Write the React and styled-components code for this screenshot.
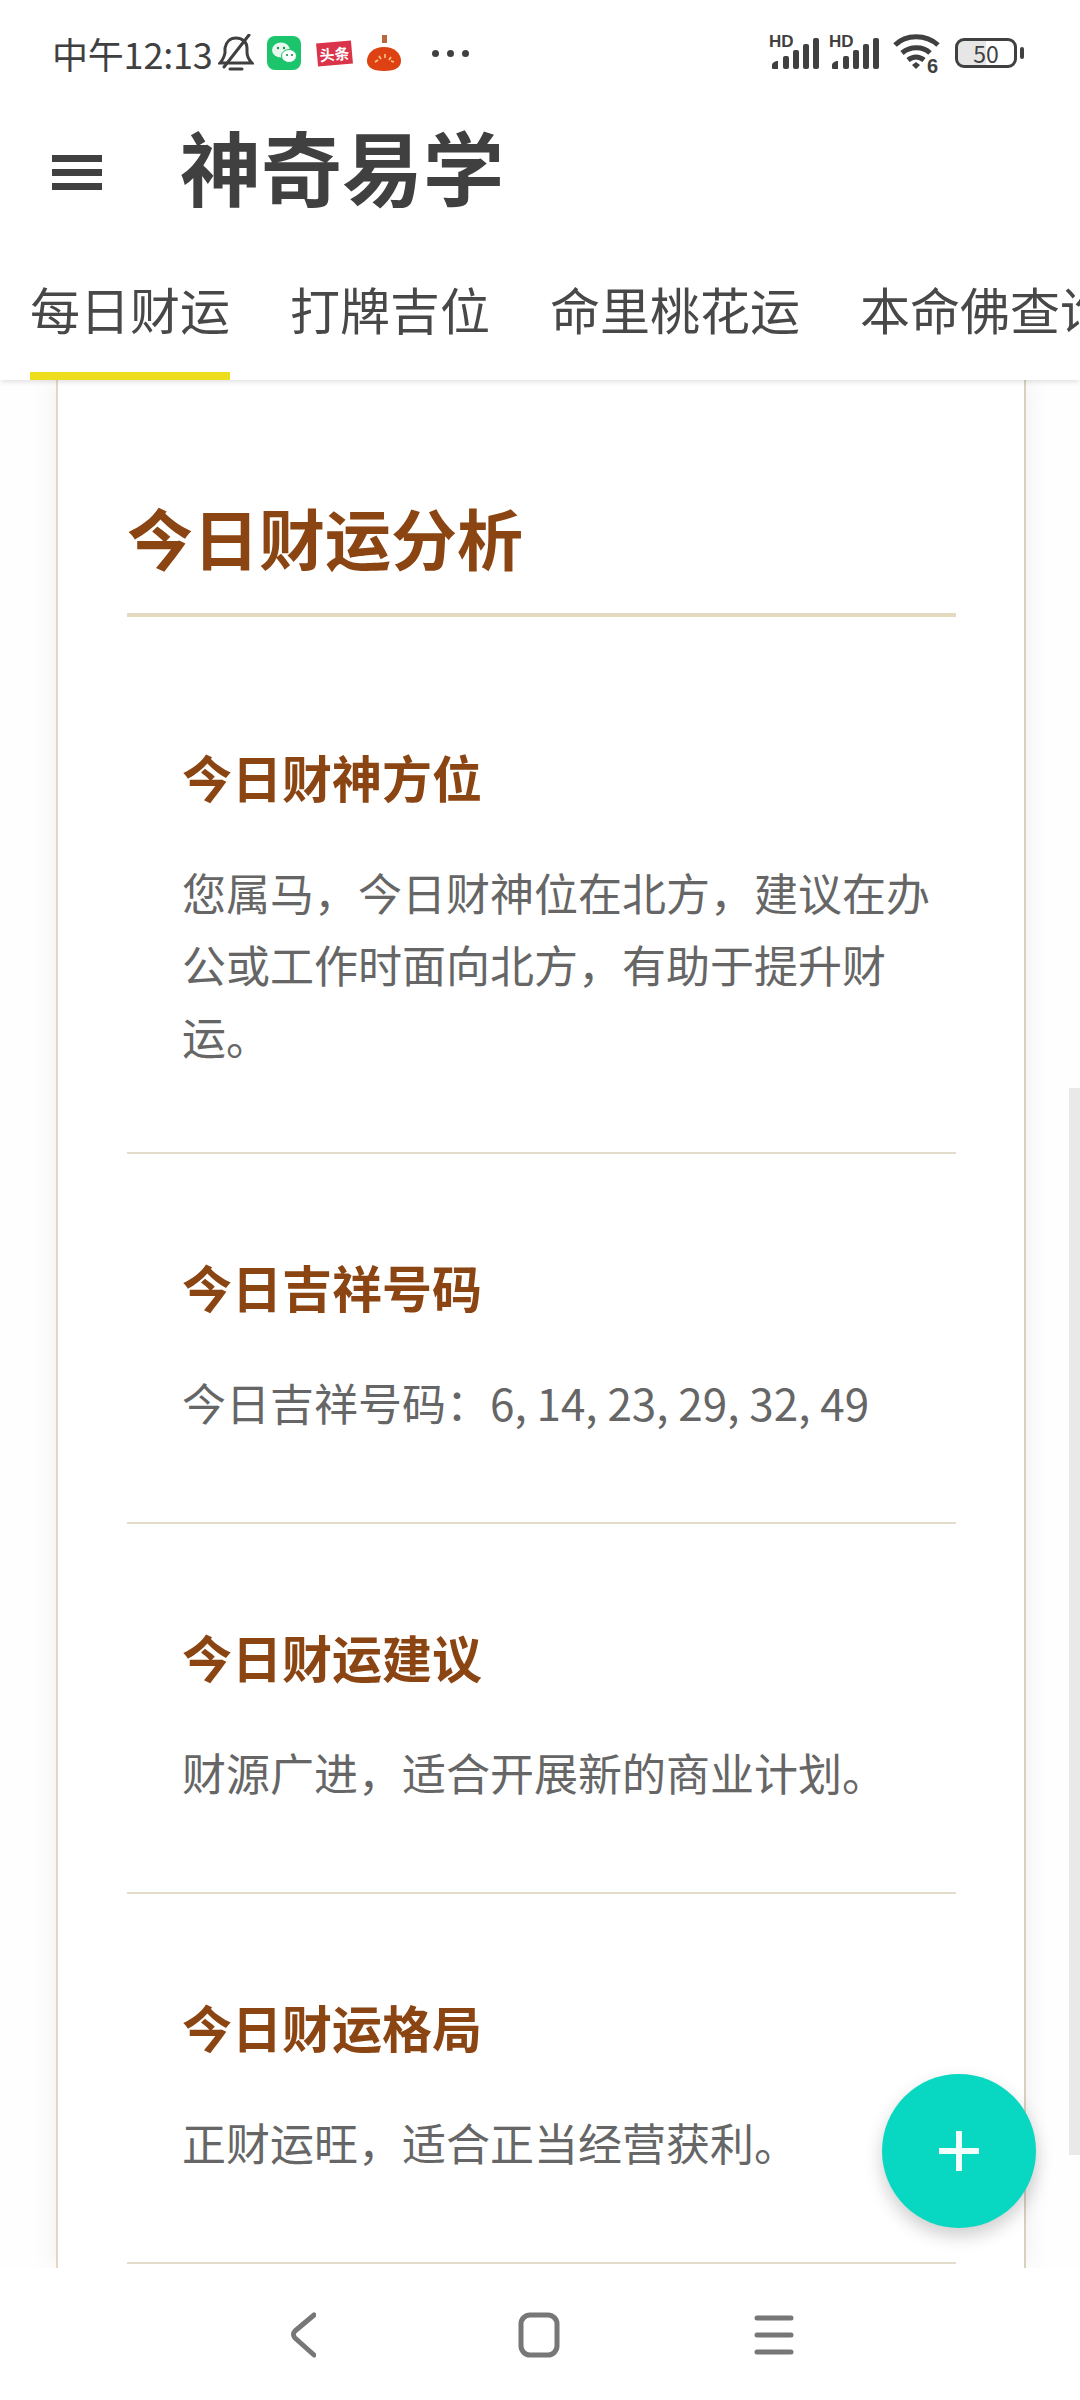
import React from "react";
import styled, { createGlobalStyle } from "styled-components";

const Global = createGlobalStyle`
  html, body {
    margin: 0;
    padding: 0;
    background: #fff;
  }
  * {
    box-sizing: border-box;
  }
`;

const Screen = styled.div`
  position: relative;
  width: 1080px;
  height: 2400px;
  display: flex;
  flex-direction: column;
  overflow: hidden;
  background: #fff;
  font-family: "Noto Sans CJK SC", "Noto Sans", sans-serif;
`;

const StatusBar = styled.div`
  height: 106px;
  flex: none;
  padding: 0 63px 0 52px;
  display: flex;
  align-items: center;
  justify-content: space-between;
  color: #404040;
`;

const StatusLeft = styled.div`
  display: flex;
  align-items: center;
`;

const StatusRight = styled.div`
  display: flex;
  align-items: center;
`;

const Clock = styled.span`
  font-size: 36px;
  line-height: 40px;
  letter-spacing: -0.2px;
  width: 166px;
  white-space: nowrap;
`;

const Toutiao = styled.span`
  width: 35px;
  height: 23px;
  margin: 0 15px 0 16px;
  background: #d9344a;
  color: #fff;
  font-size: 15px;
  line-height: 23px;
  font-weight: 700;
  text-align: center;
  white-space: nowrap;
  transform: rotate(-5deg);
`;

const Dots = styled.div`
  display: flex;
  gap: 8px;
  margin-left: 31px;
`;

const Dot = styled.span`
  width: 7px;
  height: 7px;
  border-radius: 50%;
  background: #404040;
`;

const SignalWrap = styled.div`
  position: relative;
  width: 50px;
  height: 34px;
  margin-right: 10px;
`;

const HdLabel = styled.span`
  position: absolute;
  left: -1px;
  top: -3px;
  font-family: "Liberation Sans", sans-serif;
  font-size: 17px;
  line-height: 18px;
  font-weight: 700;
  color: #404040;
`;

const Battery = styled.div`
  position: relative;
  width: 62px;
  height: 30px;
  margin-left: 14px;
  border: 3px solid #404040;
  border-radius: 9px;
  display: flex;
  align-items: center;
  justify-content: center;
  font-size: 23px;
  line-height: 24px;
  color: #404040;
  background: linear-gradient(90deg, #e6e6e6 0 50%, #fff 50%);
  &::after {
    content: "";
    position: absolute;
    right: -10px;
    top: 6px;
    width: 4px;
    height: 12px;
    border-radius: 2px;
    background: #404040;
  }
`;

const Header = styled.div`
  height: 124px;
  flex: none;
  display: flex;
  align-items: center;
  padding-left: 52px;
`;

const Burger = styled.div`
  width: 50px;
  display: flex;
  flex-direction: column;
  gap: 7px;
  margin: 8px 78px 0 0;
`;

const BurgerLine = styled.span`
  height: 7px;
  background: #404040;
`;

const Title = styled.h1`
  margin: 0;
  padding-bottom: 6px;
  font-size: 81px;
  line-height: 100px;
  font-weight: 700;
  color: #404040;
  white-space: nowrap;
`;

const Tabs = styled.div`
  position: relative;
  z-index: 2;
  height: 150px;
  flex: none;
  display: flex;
  gap: 60px;
  padding-left: 30px;
  overflow: hidden;
  background: #fff;
  box-shadow: 0 3px 5px -1px rgba(0, 0, 0, 0.12);
`;

const Tab = styled.div`
  flex: none;
  height: 100%;
  padding-top: 43px;
  font-size: 50px;
  line-height: 70px;
  color: #484848;
  white-space: nowrap;
  border-bottom: 8px solid ${(p) => (p.$active ? "#eedd1c" : "transparent")};
`;

const Content = styled.div`
  flex: 1;
  min-height: 0;
  overflow: hidden;
  background: #fefefe;
  padding: 0 54px 0 56px;
`;

const Card = styled.div`
  height: 100%;
  background: #fff;
  border-left: 2px solid #e6d6c6;
  border-right: 2px solid #d8d0c0;
  padding: 112px 68px 0 69px;
  box-shadow: 0 0 26px rgba(0, 0, 0, 0.07);
`;

const CardTitle = styled.h2`
  margin: 0;
  height: 125px;
  font-size: 66px;
  line-height: 88px;
  font-weight: 700;
  color: #8b4513;
  border-bottom: 4px solid #e3dac0;
  white-space: nowrap;
`;

const Section = styled.section`
  height: 370px;
  padding: 96px 0 0 55px;
  border-bottom: 2px solid #e3dccb;
  &:first-of-type {
    height: 537px;
    padding-top: 123px;
  }
`;

const SectionTitle = styled.h3`
  margin: 0 0 44px;
  font-size: 50px;
  line-height: 72px;
  font-weight: 700;
  color: #8b4513;
  white-space: nowrap;
`;

const SectionText = styled.p`
  margin: 0;
  font-size: 44px;
  line-height: 72px;
  color: #666;
`;

const Scrollbar = styled.div`
  position: absolute;
  right: 0;
  top: 1088px;
  width: 11px;
  height: 1067px;
  background: #e9e9e9;
`;

const Fab = styled.div`
  position: absolute;
  left: 882px;
  top: 2074px;
  width: 154px;
  height: 154px;
  border-radius: 50%;
  background: #08d8c2;
  display: flex;
  align-items: center;
  justify-content: center;
  box-shadow: 0 8px 18px rgba(0, 0, 0, 0.2);
`;

const NavBar = styled.div`
  position: relative;
  z-index: 1;
  height: 132px;
  flex: none;
  background: #fff;
  display: flex;
  align-items: flex-start;
  padding: 44px 0 0 290px;
  gap: 202px;
`;

const NavIcon = styled.svg`
  display: block;
  flex: none;
`;

const sections = [
  {
    title: "今日财神方位",
    text: "您属马，今日财神位在北方，建议在办公或工作时面向北方，有助于提升财运。",
  },
  { title: "今日吉祥号码", text: "今日吉祥号码：6, 14, 23, 29, 32, 49" },
  { title: "今日财运建议", text: "财源广进，适合开展新的商业计划。" },
  { title: "今日财运格局", text: "正财运旺，适合正当经营获利。" },
];

const tabs = ["每日财运", "打牌吉位", "命里桃花运", "本命佛查询"];

const BellOff = () => (
  <NavIcon width="36" height="38" viewBox="0 0 36 38" fill="none" stroke="#404040" strokeWidth="3" strokeLinecap="round" style={{ marginRight: 13 }}>
    <path d="M2 29h32c-3-3-5-6-5-11V14C29 8 24 4 18 4S8 8 7 14v5c-1 4-2 7-5 10z" />
    <path d="M12 35h12" />
    <path d="M31 1L6 33" />
  </NavIcon>
);

const WeChat = () => (
  <NavIcon width="34" height="34" viewBox="0 0 34 34">
    <rect width="34" height="34" rx="8" fill="#1cc56b" />
    <ellipse cx="14" cy="14" rx="9" ry="7.5" fill="#e8f8ee" />
    <ellipse cx="22" cy="20" rx="7.5" ry="6.5" fill="#fff" stroke="#1cc56b" strokeWidth="1" />
    <circle cx="11" cy="12" r="1.2" fill="#1a8f50" />
    <circle cx="17" cy="12" r="1.2" fill="#1a8f50" />
    <circle cx="20" cy="19" r="1.1" fill="#1a8f50" />
    <circle cx="25" cy="19" r="1.1" fill="#1a8f50" />
  </NavIcon>
);

const Tomato = () => (
  <NavIcon width="34" height="36" viewBox="0 0 34 36">
    <rect x="15" y="0" width="5" height="8" fill="#b8683f" />
    <path d="M17 12c10 0 17 6 17 14 0 6-5 10-17 10S0 32 0 26c0-8 7-14 17-14z" fill="#de4212" />
    <path d="M8 27l3-2M12 21l2 3M18 19v4M24 22l-2 3M27 27l-3-1" stroke="#ffc58a" strokeWidth="1.6" />
  </NavIcon>
);

const Signal = () => (
  <SignalWrap>
    <HdLabel>HD</HdLabel>
    <NavIcon width="50" height="34" viewBox="0 0 50 34" fill="#404040">
      <path d="M2 29c0-2 3-4 6-4v8H3c-1 0-1-1-1-2z" />
      <rect x="13" y="20" width="6" height="13" rx="2" />
      <rect x="23" y="14" width="6" height="19" rx="2" />
      <rect x="33" y="8" width="6" height="25" rx="2" />
      <rect x="43" y="2" width="6" height="31" rx="2" />
    </NavIcon>
  </SignalWrap>
);

const Wifi = () => (
  <NavIcon width="48" height="40" viewBox="0 0 48 40" fill="none" stroke="#404040" strokeWidth="5" style={{ marginLeft: 3 }}>
    <path d="M2 12C13 1 33 1 45 12" />
    <path d="M9 20c8-7 21-7 28 0" />
    <path d="M15 27c5-4 11-4 16 0" />
    <path d="M19 32l4-3 4 3-4 4z" fill="#404040" stroke="none" />
    <text x="34" y="40" fontSize="20" fontWeight="700" fill="#404040" stroke="none" fontFamily="Liberation Sans, sans-serif">6</text>
  </NavIcon>
);

export default function App() {
  return (
    <>
      <Global />
      <Screen>
        <StatusBar>
          <StatusLeft>
            <Clock>中午12:13</Clock>
            <BellOff />
            <WeChat />
            <Toutiao>头条</Toutiao>
            <Tomato />
            <Dots>
              <Dot />
              <Dot />
              <Dot />
            </Dots>
          </StatusLeft>
          <StatusRight>
            <Signal />
            <Signal />
            <Wifi />
            <Battery>50</Battery>
          </StatusRight>
        </StatusBar>
        <Header>
          <Burger>
            <BurgerLine />
            <BurgerLine />
            <BurgerLine />
          </Burger>
          <Title>神奇易学</Title>
        </Header>
        <Tabs>
          {tabs.map((t, i) => (
            <Tab key={t} $active={i === 0}>
              {t}
            </Tab>
          ))}
        </Tabs>
        <Content>
          <Card>
            <CardTitle>今日财运分析</CardTitle>
            {sections.map((s) => (
              <Section key={s.title}>
                <SectionTitle>{s.title}</SectionTitle>
                <SectionText>{s.text}</SectionText>
              </Section>
            ))}
          </Card>
        </Content>
        <NavBar>
          <NavIcon width="26" height="46" viewBox="0 0 26 46" fill="none" stroke="#777" strokeWidth="5" strokeLinecap="round" strokeLinejoin="round">
            <path d="M24 3L5 19c-2 2-2 5 0 7l19 17" />
          </NavIcon>
          <NavIcon width="42" height="46" viewBox="0 0 42 46" fill="none" stroke="#777" strokeWidth="5">
            <rect x="3" y="3" width="36" height="40" rx="9" />
          </NavIcon>
          <NavIcon width="40" height="46" viewBox="0 0 40 46" stroke="#777" strokeWidth="5" strokeLinecap="round" style={{ marginLeft: -8 }}>
            <path d="M3 6h34M3 23h34M3 40h34" />
          </NavIcon>
        </NavBar>
        <Scrollbar />
        <Fab>
          <NavIcon width="40" height="40" viewBox="0 0 40 40" stroke="#f2fffd" strokeWidth="6">
            <path d="M0 20h40M20 0v40" />
          </NavIcon>
        </Fab>
      </Screen>
    </>
  );
}
